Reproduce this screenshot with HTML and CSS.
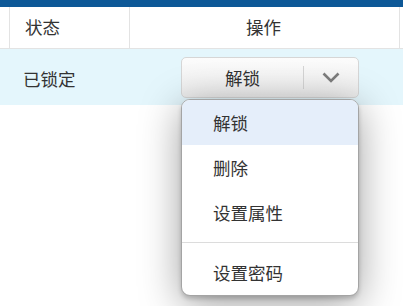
FILE: index.html
```html
<!DOCTYPE html>
<html lang="zh">
<head>
<meta charset="utf-8">
<link rel="stylesheet" href="styles.css">
</head>
<body>
<div class="topbar"></div>
<div class="table">
  <div class="row head">
    <div class="cell c0"></div>
    <div class="cell c1">状态</div>
    <div class="cell c2 center">操作</div>
    <div class="cell c3"></div>
  </div>
  <div class="row body">
    <div class="cell c0"></div>
    <div class="cell c1">已锁定</div>
    <div class="cell c2">
      <div class="split">
        <div class="btn">
          <span class="main">解锁</span>
          <span class="caret"><svg width="18" height="11" viewBox="0 0 18 11"><path d="M1.5 1.5 L9 9 L16.5 1.5" fill="none" stroke="#7d7d7d" stroke-width="2.6" stroke-linejoin="miter"/></svg></span>
        </div>
        <div class="menu">
          <div class="item active">解锁</div>
          <div class="item">删除</div>
          <div class="item">设置属性</div>
          <div class="sep"></div>
          <div class="item">设置密码</div>
        </div>
      </div>
    </div>
    <div class="cell c3"></div>
  </div>
</div>
</body>
</html>
```
FILE: styles.css
```css
html, body { margin: 0; padding: 0; background: #fff; }
body {
  width: 403px; height: 306px; overflow: hidden;
  font-family: "Noto Sans CJK SC", "Noto Sans", sans-serif;
  font-size: 17.5px; color: #333;
}
.topbar { height: 7px; background: #0d5897; }
.table { display: flex; flex-direction: column; }
.row { display: flex; }
.head { height: 41px; border-bottom: 1px solid #e3e3e3; }
.head .cell { padding-bottom: 3px; }
.body { height: 56px; background: #e4f6fc; }
.body .c1 { padding-top: 2px; }
.cell { display: flex; align-items: center; box-sizing: border-box; }
.c0 { width: 9px; }
.c1 { width: 120px; padding-left: 14px; }
.c2 { width: 270px; }
.c3 { flex: 1; }
.head .c1, .head .c2, .head .c3 { border-left: 1px solid #e3e3e3; }
.head .c1 { padding-left: 15px; }
.center { justify-content: center; padding-right: 2px; }
.body .c2 { padding-left: 52px; }
.split { position: relative; }
.btn {
  width: 178px; height: 41px; box-sizing: border-box;
  border: 1px solid #d6d6d6; border-radius: 5px;
  background: linear-gradient(#fcfcfc, #ececec);
  display: flex;
}
.main { width: 121px; display: flex; align-items: center; justify-content: center; border-right: 1px solid #d4d4d4; margin: 8px 0; }
.caret { flex: 1; display: flex; align-items: center; justify-content: center; padding-top: 1px; }
.menu {
  position: absolute; left: 0; top: 42px;
  width: 178px; box-sizing: border-box;
  background: #fff; border: 1px solid #a4a4a4; border-radius: 9px;
  box-shadow: 0 3px 4px rgba(0,0,0,0.18), 0 8px 40px rgba(0,0,0,0.38);
  overflow: hidden;
  z-index: 2;
}
.item { height: 45px; display: flex; align-items: center; padding-left: 31px; }
.item.active { background: #e5eefa; }
.sep { height: 1px; background: #dcdcdc; margin: 7px 0 7px; }
```
